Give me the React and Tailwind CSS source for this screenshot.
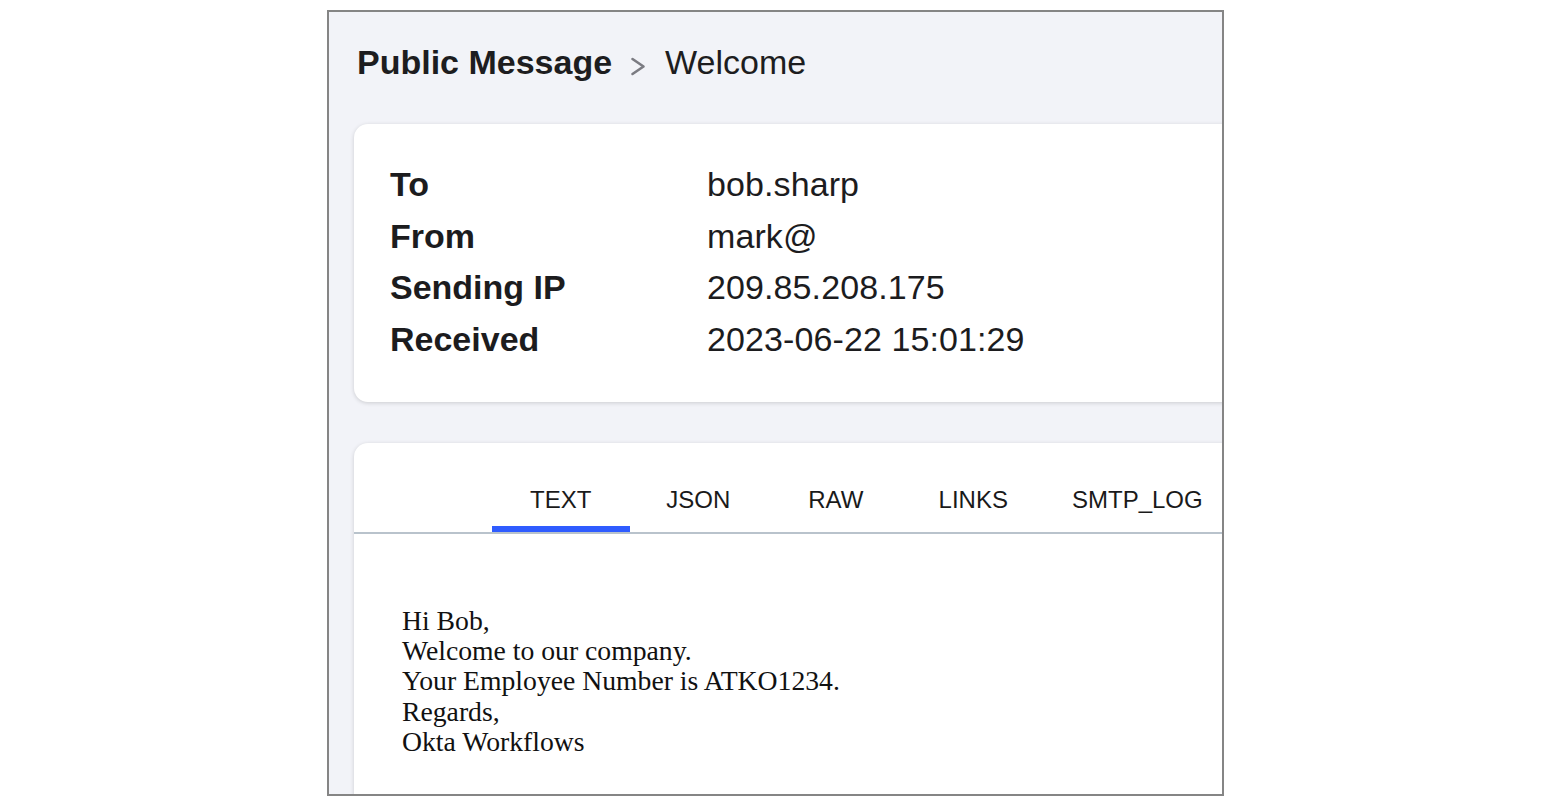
const details = [
  { label: 'To', value: 'bob.sharp' },
  { label: 'From', value: 'mark@' },
  { label: 'Sending IP', value: '209.85.208.175' },
  { label: 'Received', value: '2023-06-22 15:01:29' },
];

const tabs = ['TEXT', 'JSON', 'RAW', 'LINKS', 'SMTP_LOG'];

const bodyLines = [
  'Hi Bob,',
  'Welcome to our company.',
  'Your Employee Number is ATKO1234.',
  'Regards,',
  'Okta Workflows',
];

export default function App() {
  const active = 'TEXT';

  return (
    <div className="w-[1544px] h-[812px] bg-white overflow-hidden font-['Liberation_Sans',Arial,sans-serif]">
      <div className="ml-[327px] mt-[10px] w-[897px] h-[786px] border-2 border-[#858585] bg-[#f2f3f8] overflow-hidden">
        <div className="w-[1100px] pl-[25px]">

          {/* breadcrumb */}
          <div className="flex items-start pt-[30px] pl-[3px] h-[112px] text-[34px] leading-[40px] text-[#1d1d20]">
            <span className="font-bold">Public Message</span>
            <svg className="mt-[15px] ml-[18px] mr-[19px]" width="16" height="19" viewBox="0 0 16 19" fill="none">
              <polyline points="2.5,2 13.5,9.5 2.5,17" stroke="#7b7b82" strokeWidth="2.6" strokeLinecap="round" strokeLinejoin="round" />
            </svg>
            <span>Welcome</span>
          </div>

          {/* message details */}
          <div className="w-[1000px] bg-white rounded-[14px] shadow-[0_1px_4px_rgba(0,0,0,0.16)] pt-[35px] pb-[36px] pl-[36px]">
            {details.map(row => (
              <div key={row.label} className="flex text-[34px] leading-[51.7px] text-[#1c1c1e]">
                <div className="w-[317px] font-bold">{row.label}</div>
                <div className="tracking-[0.1px]">{row.value}</div>
              </div>
            ))}
          </div>

          {/* message body */}
          <div className="mt-[41px] w-[1000px] h-[400px] bg-white rounded-t-[14px] shadow-[0_1px_4px_rgba(0,0,0,0.16)]">
            <div className="flex pl-[138px] border-b-2 border-[#b9c3cc]">
              {tabs.map(tab => (
                <div
                  key={tab}
                  className={`flex flex-col items-center pt-[43px] ${tab === 'SMTP_LOG' ? 'px-[30px]' : 'w-[137.5px]'}`}
                >
                  <span className="text-[24px] leading-[28px] text-[#1a1a1a]">{tab}</span>
                  <div className={`mt-[12px] h-[6px] w-full ${tab === active ? 'bg-[#2f5cff]' : 'bg-transparent'}`} />
                </div>
              ))}
            </div>
            <div className="pt-[72px] pl-[48px] font-['Liberation_Serif','Times_New_Roman',serif] text-[27.7px] leading-[30.3px] text-[#111]">
              {bodyLines.map(line => (
                <div key={line}>{line}</div>
              ))}
            </div>
          </div>

        </div>
      </div>
    </div>
  );
}
